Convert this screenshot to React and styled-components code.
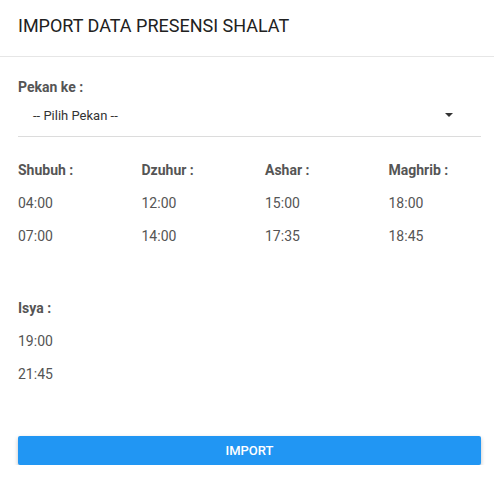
import React from 'react'
import styled, { createGlobalStyle } from 'styled-components'

const GlobalStyle = createGlobalStyle`
  html, body {
    margin: 0;
    padding: 0;
    background: #fff;
  }
  body {
    font-family: Roboto, "Liberation Sans", sans-serif;
  }
`

const Panel = styled.div`
  width: 494px;
  background: #fff;
`

const Header = styled.div`
  padding: 15px 18px 0;
  height: 41px;
  border-bottom: 1px solid #e6e6e6;

  h1 {
    margin: 0;
    font-size: 18px;
    font-weight: 400;
    line-height: 22px;
    color: #212121;
  }
`

const Body = styled.div`
  padding: 20px 13px 0 18px;
`

const Label = styled.div`
  font-size: 14px;
  font-weight: 700;
  color: #555;
  line-height: 20px;
`

const SelectBox = styled.div`
  display: flex;
  align-items: center;
  height: 36px;
  padding: 0 15px 3px;
  border-bottom: 1px solid #dcdcdc;
  font-size: 13px;
  color: #333;

  span { flex: 1; }
`

const Caret = styled.i`
  width: 0;
  height: 0;
  margin-right: 13px;
  border-left: 4px solid transparent;
  border-right: 4px solid transparent;
  border-top: 4px solid #333;
`

const Grid = styled.div`
  display: grid;
  grid-template-columns: repeat(4, 123.5px);
  margin: 23px 0 0 -18px;
  row-gap: 52px;
`

const Prayer = styled.div`
  padding-left: 18px;
  display: flex;
  flex-direction: column;
  gap: 13px;
`

const Name = styled.div`
  font-size: 14px;
  font-weight: 700;
  color: #555;
  line-height: 20px;
`

const Time = styled.div`
  font-size: 14px;
  color: #555;
  line-height: 20px;
`

const Button = styled.button`
  display: block;
  width: 463px;
  height: 29px;
  margin-top: 52px;
  border: none;
  border-radius: 2px;
  background: #2196f3;
  color: #fff;
  font-family: Roboto, "Liberation Sans", sans-serif;
  font-size: 13px;
  font-weight: 500;
  box-shadow: 0 2px 4px rgba(0, 0, 0, 0.25);
  cursor: pointer;
`

const prayers = [
  { name: 'Shubuh', start: '04:00', end: '07:00' },
  { name: 'Dzuhur', start: '12:00', end: '14:00' },
  { name: 'Ashar', start: '15:00', end: '17:35' },
  { name: 'Maghrib', start: '18:00', end: '18:45' },
  { name: 'Isya', start: '19:00', end: '21:45' },
]

export default function App() {
  return (
    <Panel>
      <GlobalStyle />
      <Header>
        <h1>IMPORT DATA PRESENSI SHALAT</h1>
      </Header>
      <Body>
        <Label>Pekan ke :</Label>
        <SelectBox>
          <span>-- Pilih Pekan --</span>
          <Caret />
        </SelectBox>
        <Grid>
          {prayers.map(p => (
            <Prayer key={p.name}>
              <Name>{p.name} :</Name>
              <Time>{p.start}</Time>
              <Time>{p.end}</Time>
            </Prayer>
          ))}
        </Grid>
        <Button>IMPORT</Button>
      </Body>
    </Panel>
  )
}
